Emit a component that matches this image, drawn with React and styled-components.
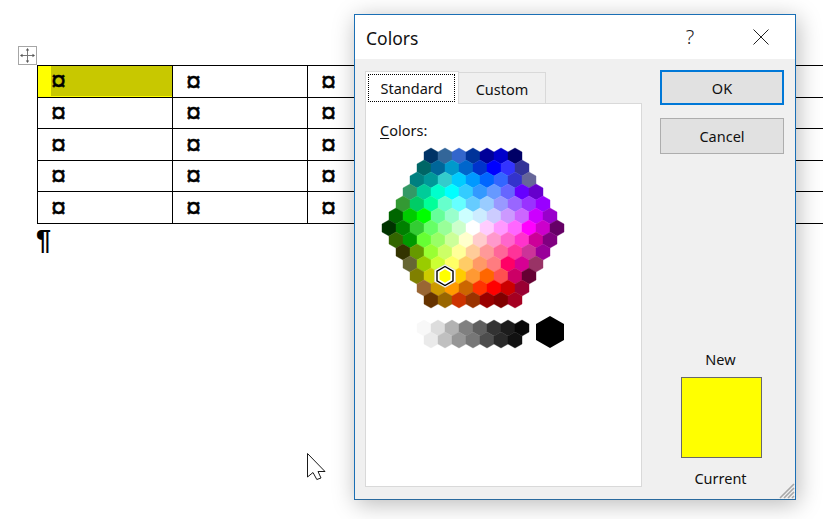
import { styled, createGlobalStyle } from 'styled-components'

const GlobalStyle = createGlobalStyle`
  html, body {
    margin: 0;
    padding: 0;
    background: #fff;
  }
`

// Office honeycomb palette, row by row
const PALETTE = [
  ['003366', '336699', '3366CC', '003399', '000099', '0000CC', '000066'],
  ['006666', '006699', '0099CC', '0066CC', '0033CC', '0000FF', '3333FF', '333399'],
  ['008080', '009999', '33CCCC', '00CCFF', '0099FF', '0066FF', '3366FF', '3333CC', '666699'],
  ['339966', '00CC99', '00FFCC', '00FFFF', '33CCFF', '3399FF', '6699FF', '6666FF', '6600FF', '6600CC'],
  ['339933', '00CC66', '00FF99', '66FFCC', '66FFFF', '66CCFF', '99CCFF', '9999FF', '9966FF', '9933FF', '9900FF'],
  ['006600', '00CC00', '00FF00', '66FF99', '99FFCC', 'CCFFFF', 'CCECFF', 'CCCCFF', 'CC99FF', 'CC66FF', 'CC00FF', '9900CC'],
  ['003300', '008000', '33CC33', '66FF66', '99FF99', 'CCFFCC', 'FFFFFF', 'FFCCFF', 'FF99FF', 'FF66FF', 'FF00FF', 'CC00CC', '660066'],
  ['336600', '009900', '66FF33', '99FF66', 'CCFF99', 'FFFFCC', 'FFCCCC', 'FF99CC', 'FF66CC', 'FF33CC', 'CC0099', '800080'],
  ['333300', '669900', '99FF33', 'CCFF66', 'FFFF99', 'FFCC99', 'FF9999', 'FF6699', 'FF3399', 'CC3399', '990099'],
  ['666633', '99CC00', 'CCFF33', 'FFFF66', 'FFCC66', 'FF9966', 'FF7C80', 'FF0066', 'D60093', '993366'],
  ['808000', 'CCCC00', 'FFFF00', 'FFCC00', 'FF9933', 'FF6600', 'FF5050', 'CC0066', '660033'],
  ['996633', 'CC9900', 'FF9900', 'CC6600', 'FF3300', 'FF0000', 'CC0000', '990033'],
  ['663300', '996600', 'CC3300', '993300', '990000', '800000', 'A50021'],
]
const GREYS_TOP = ['F8F8F8', 'DDDDDD', 'B2B2B2', '808080', '5F5F5F', '333333', '1C1C1C', '080808']
const GREYS_BOTTOM = ['EAEAEA', 'C0C0C0', '969696', '777777', '4D4D4D', '292929', '111111']

const ROW_HEIGHTS = [32, 31, 32, 31, 32]

const Page = styled.div`
  position: relative;
  width: 823px;
  height: 519px;
  overflow: hidden;
  background: #fff;
  font-family: "Noto Sans", "Open Sans", sans-serif;
  color: #111;
`

const Doc = styled.div`
  display: flex;
  flex-direction: column;
  padding: 46px 0 0 18px;
`

const MoveHandle = styled.div`
  display: flex;
  align-items: center;
  justify-content: center;
  width: 17px;
  height: 17px;
  border: 1px solid #a6a6a6;
`

const WordTable = styled.div`
  display: grid;
  grid-template-columns: repeat(6, 135px);
  grid-template-rows: ${ROW_HEIGHTS.map((h) => `${h}px`).join(' ')};
  width: 810px;
  margin-left: 19px;
  border-top: 1px solid #000;
  border-left: 1px solid #000;
`

const Cell = styled.div`
  display: flex;
  align-items: center;
  box-sizing: border-box;
  padding-left: 13px;
  border-right: 1px solid #000;
  border-bottom: 1px solid #000;
`

const SelectedCell = styled(Cell)`
  align-items: stretch;
  padding: 0 0 1px 13px;
  background: #ffff00;
`

const SelectedFill = styled.div`
  display: flex;
  align-items: center;
  flex: 1;
  background: #c8c800;
`

const CellMark = styled.span`
  font: 27px "Liberation Sans", Arial, sans-serif;
  line-height: 20px;
  -webkit-text-stroke: 0.5px #000;
  color: #000;
`

const Pilcrow = styled.div`
  margin: 0 0 0 18px;
  font: bold 27px/32px "Liberation Sans", Arial, sans-serif;
  color: #000;
`

const Cursor = styled.svg`
  position: absolute;
  left: 307px;
  top: 453px;
`

const Dialog = styled.div`
  position: absolute;
  left: 354px;
  top: 14px;
  box-sizing: border-box;
  display: flex;
  flex-direction: column;
  width: 442px;
  height: 486px;
  border: 1px solid #1a6fb5;
  border-bottom-color: #2a6a9e;
  background: #f0f0f0;
  box-shadow: 2px 4px 22px rgba(0, 0, 0, 0.28);
`

const TitleBar = styled.div`
  display: flex;
  align-items: center;
  height: 44px;
  padding-left: 11px;
  background: #fff;
`

const Title = styled.div`
  flex: 1;
  font-size: 17.5px;
  padding-top: 1px;
`

const HelpButton = styled.div`
  width: 20px;
  margin-right: 53px;
  font-size: 20px;
  line-height: 24px;
  font-weight: 300;
  text-align: center;
  color: #222;
`

const CloseIcon = styled.svg`
  margin-right: 26px;
`

const DialogBody = styled.div`
  flex: 1;
  display: flex;
  gap: 18px;
  padding: 12px 11px 12px 10px;
  min-height: 0;
`

const LeftColumn = styled.div`
  display: flex;
  flex-direction: column;
  width: 277px;
`

const Tabs = styled.div`
  display: flex;
  align-items: flex-end;
  height: 32px;
  position: relative;
  z-index: 1;
`

const Tab = styled.div`
  box-sizing: border-box;
  display: flex;
  align-items: center;
  justify-content: center;
  font-size: 14.5px;
  border: 1px solid #d9d9d9;
  ${(p) =>
    p.$active
      ? `
    width: 94px;
    height: 33px;
    margin-bottom: -1px;
    background: #fff;
    border-bottom: none;
    padding: 2px 3px 2px 2px;
  `
      : `
    width: 87px;
    height: 31px;
    border-left: none;
    border-bottom: none;
    padding-top: 2px;
    background: #f0f0f0;
  `}
`

const TabFocus = styled.div`
  display: flex;
  align-items: center;
  justify-content: center;
  width: 100%;
  height: 28px;
  box-sizing: border-box;
  margin-bottom: 1px;
  border: 1px dotted #000;
`

const Panel = styled.div`
  flex: 1;
  box-sizing: border-box;
  padding: 16px 14px 0;
  background: #fff;
  border: 1px solid #d9d9d9;
`

const PanelLabel = styled.div`
  font-size: 14.5px;
  line-height: 20px;

  u {
    text-underline-offset: 2px;
  }
`

const Honeycomb = styled.svg`
  display: block;
  margin: 4px 0 0 -2px;
`

const RightColumn = styled.div`
  display: flex;
  flex-direction: column;
  align-items: center;
  width: 124px;
`

const DialogButton = styled.button`
  box-sizing: border-box;
  width: 124px;
  height: ${(p) => (p.$primary ? '35px' : '36px')};
  margin-top: ${(p) => (p.$primary ? '-1px' : '13px')};
  padding: 0;
  background: #e1e1e1;
  border: ${(p) => (p.$primary ? '2px solid #0078d7' : '1px solid #adadad')};
  border-radius: 0;
  font-family: inherit;
  font-size: 14.5px;
  color: #111;
`

const PreviewLabel = styled.div`
  font-size: 14.5px;
  line-height: 20px;
  margin-right: 3px;
  margin-top: ${(p) => (p.$first ? 'auto' : '10px')};
  margin-bottom: ${(p) => (p.$first ? '8px' : '-1px')};
`

const Swatch = styled.div`
  box-sizing: border-box;
  width: 81px;
  height: 81px;
  margin-right: 1px;
  background: #ffff00;
  border: 1px solid #696969;
`

const Grip = styled.svg`
  position: absolute;
  right: 0;
  bottom: 0;
`

function hexPath(cx, cy, hw = 7, hh = 8) {
  const s = hh / 2
  return `M${cx} ${cy - hh}L${cx + hw} ${cy - s}L${cx + hw} ${cy + s}L${cx} ${cy + hh}L${cx - hw} ${cy + s}L${cx - hw} ${cy - s}Z`
}

function ColorHoneycomb() {
  const centerX = 95
  const cells = []
  PALETTE.forEach((row, r) => {
    const startX = centerX - ((row.length - 1) * 14) / 2
    row.forEach((color, i) => {
      cells.push(
        <path
          key={`${r}-${i}`}
          d={hexPath(startX + i * 14, 12 + r * 12)}
          fill={`#${color}`}
          stroke={`#${color}`}
          strokeWidth="0.4"
        />,
      )
    })
  })

  return (
    <Honeycomb width="192" height="212" viewBox="0 0 192 212">
      {cells}
      {GREYS_TOP.map((color, i) => (
        <path key={color} d={hexPath(46 + i * 14, 184)} fill={`#${color}`} stroke={`#${color}`} strokeWidth="0.4" />
      ))}
      {GREYS_BOTTOM.map((color, i) => (
        <path key={color} d={hexPath(53 + i * 14, 196)} fill={`#${color}`} stroke={`#${color}`} strokeWidth="0.4" />
      ))}
      <path d={hexPath(172, 188, 14, 16)} fill="#000" />
      {/* selected cell */}
      <path d={hexPath(67, 132, 10.5, 11.5)} fill="#fff" stroke="#ccc" strokeWidth="0.5" />
      <path d={hexPath(67, 132, 8, 9.5)} fill="#fff" stroke="#000" strokeWidth="1.4" />
      <path d={hexPath(67, 132, 5.5, 6.8)} fill="#ffff00" />
    </Honeycomb>
  )
}

export default function App() {
  const rows = ROW_HEIGHTS.map((_, r) => r)
  const cols = [0, 1, 2, 3, 4, 5]

  return (
    <Page>
      <GlobalStyle />
      <Doc>
        <MoveHandle>
          <svg width="15" height="15" viewBox="0 0 15 15" fill="#555">
            <path d="M7.5 1.5V13.5M1.5 7.5H13.5" stroke="#777" strokeWidth="1" fill="none" />
            <path d="M7.5 0L9.2 2.5H5.8ZM7.5 15L9.2 12.5H5.8ZM0 7.5L2.5 5.8V9.2ZM15 7.5L12.5 5.8V9.2Z" />
          </svg>
        </MoveHandle>
        <WordTable>
          {rows.map((r) =>
            cols.map((c) =>
              r === 0 && c === 0 ? (
                <SelectedCell key="selected">
                  <SelectedFill>
                    <CellMark>¤</CellMark>
                  </SelectedFill>
                </SelectedCell>
              ) : (
                // cells further right sit behind the dialog, their marks never show
                <Cell key={`${r}-${c}`}>{c < 3 && <CellMark>¤</CellMark>}</Cell>
              ),
            ),
          )}
        </WordTable>
        <Pilcrow>¶</Pilcrow>
      </Doc>

      <Cursor width="20" height="28" viewBox="0 0 20 28">
        <path d="M0.5 0.5V24L6 19.5L9.8 26.5L14 25L11 18.5H18Z" fill="#fff" stroke="#1a1a1a" strokeWidth="1" />
      </Cursor>

      <Dialog>
        <TitleBar>
          <Title>Colors</Title>
          <HelpButton>?</HelpButton>
          <CloseIcon width="16" height="16" viewBox="0 0 16 16">
            <path d="M0.5 0.5L15.5 15.5M15.5 0.5L0.5 15.5" stroke="#222" strokeWidth="1" fill="none" />
          </CloseIcon>
        </TitleBar>
        <DialogBody>
          <LeftColumn>
            <Tabs>
              <Tab $active>
                <TabFocus>Standard</TabFocus>
              </Tab>
              <Tab>Custom</Tab>
            </Tabs>
            <Panel>
              <PanelLabel>
                <u>C</u>olors:
              </PanelLabel>
              <ColorHoneycomb />
            </Panel>
          </LeftColumn>
          <RightColumn>
            <DialogButton $primary>OK</DialogButton>
            <DialogButton>Cancel</DialogButton>
            <PreviewLabel $first>New</PreviewLabel>
            <Swatch />
            <PreviewLabel>Current</PreviewLabel>
          </RightColumn>
        </DialogBody>
        <Grip width="16" height="16" viewBox="0 0 16 16">
          <path d="M1 15L15 1M5 15L15 5M9 15L15 9M13 15L15 13" stroke="#a8a8a8" strokeWidth="1.6" fill="none" />
        </Grip>
      </Dialog>
    </Page>
  )
}
